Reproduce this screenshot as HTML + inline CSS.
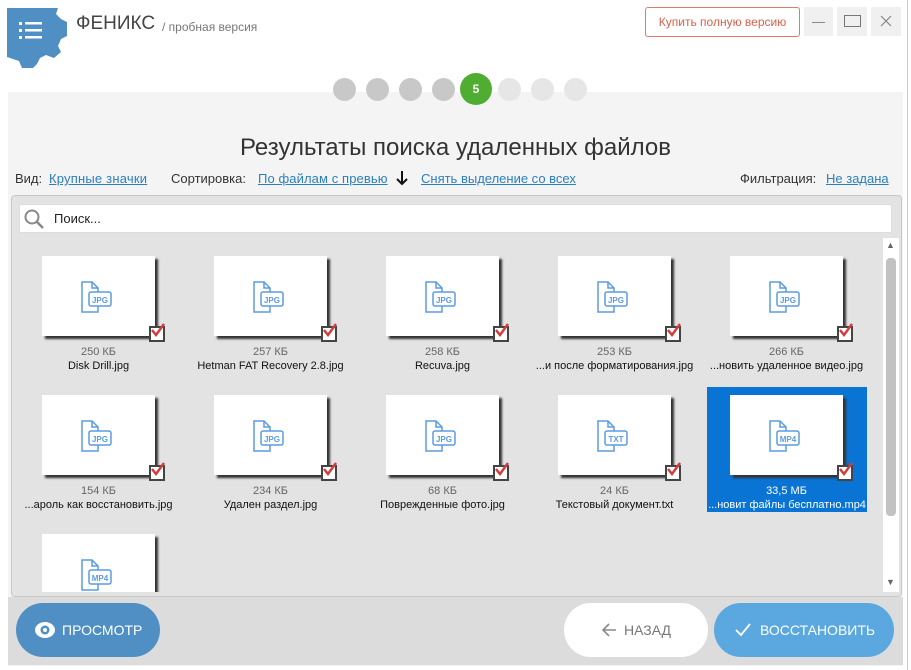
<!DOCTYPE html>
<html><head><meta charset="utf-8"><style>
*{margin:0;padding:0;box-sizing:border-box}
body{width:911px;height:670px;background:#fff;position:relative;overflow:hidden;font-family:"Liberation Sans","DejaVu Sans",sans-serif}
.a{position:absolute}
.dot{position:absolute;width:23px;height:23px;border-radius:50%;top:78px}
.cell{position:absolute;width:113px;height:126px}
.th{position:absolute;left:0;top:0;width:113px;height:80px;background:#fff;box-shadow:3px 3px 2px #333}
.ck{position:absolute;left:107px;top:70px;width:16px;height:16px;border:2px solid #444;background:#fff}
.sz{position:absolute;left:-40px;width:193px;top:90px;text-align:center;font-size:11px;color:#666}
.nm{position:absolute;left:-40px;width:193px;top:104px;text-align:center;font-size:11px;color:#111;white-space:nowrap}
.sel .sz,.sel .nm{color:#fff}
.t{position:absolute;top:171px;font-size:13px;color:#333;white-space:nowrap}
.lnk{color:#2a7fc0;text-decoration:underline}
</style></head><body>
<svg class="a" style="left:0;top:0" width="72" height="72" viewBox="0 0 72 72">
<path d="M7 8 L58 8 L56 14 L61 19 L67 22 L67 36 L61 39 L58 46 L61 52 L54 58 L46 55 L40 58 L37 64 L33 68 L22 68 L19 61 L7 57 Z" fill="#4f8fc4"/>
<g fill="#fff"><rect x="19" y="22" width="3" height="3"/><rect x="25" y="22" width="17" height="2.5"/><rect x="19" y="29" width="3" height="3"/><rect x="25" y="29" width="17" height="2.5"/><rect x="19" y="36" width="3" height="3"/><rect x="25" y="36" width="17" height="2.5"/></g>
</svg>
<div class="a" style="left:76px;top:13px;font-size:19px;color:#444">ФЕНИКС</div>
<div class="a" style="left:162px;top:20px;font-size:12px;color:#777">/ пробная версия</div>
<div class="a" style="left:645px;top:7px;width:155px;height:30px;border:1px solid #e07a6a;border-radius:3px;color:#d9604c;font-size:12px;text-align:center;line-height:28px">Купить полную версию</div>
<div class="a" style="left:804px;top:7px;width:29px;height:29px;background:#f0f0f0"><div class="a" style="left:8px;top:15px;width:13px;height:1px;background:#888"></div></div>
<div class="a" style="left:837px;top:7px;width:30px;height:29px;background:#f0f0f0"><div class="a" style="left:7px;top:8px;width:17px;height:12px;border:1px solid #777"></div></div>
<svg class="a" style="left:871px;top:7px" width="30" height="29"><rect width="30" height="29" fill="#f0f0f0"/><path d="M10 9 L20 19 M20 9 L10 19" stroke="#888" stroke-width="1.2"/></svg>
<div class="a" style="left:907px;top:0;width:1px;height:670px;background:#ccc"></div>
<div class="a" style="left:8px;top:92px;width:895px;height:574px;background:#f4f4f4"></div>
<div class="dot" style="left:333px;background:#c8c8c8"></div>
<div class="dot" style="left:366px;background:#c8c8c8"></div>
<div class="dot" style="left:399px;background:#c8c8c8"></div>
<div class="dot" style="left:432px;background:#c8c8c8"></div>
<div class="a" style="left:460px;top:73px;width:32px;height:32px;border-radius:50%;background:#4fae31;color:#fff;font-weight:bold;font-size:12px;text-align:center;line-height:32px">5</div>
<div class="dot" style="left:498px;background:#e6e6e6"></div>
<div class="dot" style="left:531px;background:#e6e6e6"></div>
<div class="dot" style="left:564px;background:#e6e6e6"></div>
<div class="a" style="left:0;width:911px;top:134px;text-align:center;font-size:24px;color:#333">Результаты поиска удаленных файлов</div>
<div class="t" style="left:15px">Вид:</div>
<div class="t lnk" style="left:49px;letter-spacing:0.2px">Крупные значки</div>
<div class="t" style="left:171px">Сортировка:</div>
<div class="t lnk" style="left:258px;letter-spacing:0.1px">По файлам с превью</div>
<svg class="a" style="left:396px;top:170px" width="12" height="16"><path d="M6 1 V14 M1 9 L6 14 L11 9" fill="none" stroke="#111" stroke-width="2"/></svg>
<div class="t lnk" style="left:421px">Снять выделение со всех</div>
<div class="t" style="left:740px">Фильтрация:</div>
<div class="t lnk" style="left:826px">Не задана</div>
<div class="a" style="left:11px;top:195px;width:891px;height:402px;background:#e3e3e3;border:1px solid #c8c8c8;border-radius:4px"></div>
<div class="a" style="left:19px;top:204px;width:873px;height:29px;background:#fff;border:1px solid #ddd"></div>
<svg class="a" style="left:23px;top:208px" width="22" height="22" viewBox="0 0 22 22"><circle cx="9" cy="9" r="6.5" fill="none" stroke="#888" stroke-width="2"/><path d="M14 14 L20 20" stroke="#888" stroke-width="2.5"/></svg>
<div class="a" style="left:54px;top:211px;font-size:13px;color:#222">Поиск...</div>
<div class="a" style="left:883px;top:238px;width:16px;height:354px;background:#fff"></div>
<div class="a" style="left:886px;top:258px;width:10px;height:258px;background:#c2c2c2;border-radius:4px"></div>
<div class="a" style="left:886px;top:240px;font-size:9px;color:#666">▲</div>
<div class="a" style="left:886px;top:577px;font-size:9px;color:#666">▼</div>
<svg width="0" height="0" style="position:absolute"><defs>
<g id="ic"><path d="M40 26 H50 L56 32 V56 H40 Z" fill="none" stroke="#5b9be0" stroke-width="1.5"/><path d="M50 26 V32 H56" fill="none" stroke="#5b9be0" stroke-width="1.5"/><rect x="47" y="36" width="22" height="14" rx="2" fill="#fff" stroke="#5b9be0" stroke-width="1.5"/></g>
<g id="ck"><path d="M4 8 L8 13 L16 2" fill="none" stroke="#d43c3c" stroke-width="2.5"/></g>
</defs></svg>
<div class="cell" style="left:42px;top:256px"><div class="th"><svg width="113" height="80"><use href="#ic"/><text x="58" y="47" font-size="8" font-weight="bold" fill="#5b9be0" text-anchor="middle" font-family="Liberation Sans">JPG</text></svg></div><div class="ck"></div><svg class="a" style="left:106px;top:66px" width="20" height="18"><use href="#ck"/></svg><div class="sz">250 КБ</div><div class="nm">Disk Drill.jpg</div></div>
<div class="cell" style="left:214px;top:256px"><div class="th"><svg width="113" height="80"><use href="#ic"/><text x="58" y="47" font-size="8" font-weight="bold" fill="#5b9be0" text-anchor="middle" font-family="Liberation Sans">JPG</text></svg></div><div class="ck"></div><svg class="a" style="left:106px;top:66px" width="20" height="18"><use href="#ck"/></svg><div class="sz">257 КБ</div><div class="nm">Hetman FAT Recovery 2.8.jpg</div></div>
<div class="cell" style="left:386px;top:256px"><div class="th"><svg width="113" height="80"><use href="#ic"/><text x="58" y="47" font-size="8" font-weight="bold" fill="#5b9be0" text-anchor="middle" font-family="Liberation Sans">JPG</text></svg></div><div class="ck"></div><svg class="a" style="left:106px;top:66px" width="20" height="18"><use href="#ck"/></svg><div class="sz">258 КБ</div><div class="nm">Recuva.jpg</div></div>
<div class="cell" style="left:558px;top:256px"><div class="th"><svg width="113" height="80"><use href="#ic"/><text x="58" y="47" font-size="8" font-weight="bold" fill="#5b9be0" text-anchor="middle" font-family="Liberation Sans">JPG</text></svg></div><div class="ck"></div><svg class="a" style="left:106px;top:66px" width="20" height="18"><use href="#ck"/></svg><div class="sz">253 КБ</div><div class="nm">...и после форматирования.jpg</div></div>
<div class="cell" style="left:730px;top:256px"><div class="th"><svg width="113" height="80"><use href="#ic"/><text x="58" y="47" font-size="8" font-weight="bold" fill="#5b9be0" text-anchor="middle" font-family="Liberation Sans">JPG</text></svg></div><div class="ck"></div><svg class="a" style="left:106px;top:66px" width="20" height="18"><use href="#ck"/></svg><div class="sz">266 КБ</div><div class="nm">...новить удаленное видео.jpg</div></div>
<div class="cell" style="left:42px;top:395px"><div class="th"><svg width="113" height="80"><use href="#ic"/><text x="58" y="47" font-size="8" font-weight="bold" fill="#5b9be0" text-anchor="middle" font-family="Liberation Sans">JPG</text></svg></div><div class="ck"></div><svg class="a" style="left:106px;top:66px" width="20" height="18"><use href="#ck"/></svg><div class="sz">154 КБ</div><div class="nm">...ароль как восстановить.jpg</div></div>
<div class="cell" style="left:214px;top:395px"><div class="th"><svg width="113" height="80"><use href="#ic"/><text x="58" y="47" font-size="8" font-weight="bold" fill="#5b9be0" text-anchor="middle" font-family="Liberation Sans">JPG</text></svg></div><div class="ck"></div><svg class="a" style="left:106px;top:66px" width="20" height="18"><use href="#ck"/></svg><div class="sz">234 КБ</div><div class="nm">Удален раздел.jpg</div></div>
<div class="cell" style="left:386px;top:395px"><div class="th"><svg width="113" height="80"><use href="#ic"/><text x="58" y="47" font-size="8" font-weight="bold" fill="#5b9be0" text-anchor="middle" font-family="Liberation Sans">JPG</text></svg></div><div class="ck"></div><svg class="a" style="left:106px;top:66px" width="20" height="18"><use href="#ck"/></svg><div class="sz">68 КБ</div><div class="nm">Поврежденные фото.jpg</div></div>
<div class="cell" style="left:558px;top:395px"><div class="th"><svg width="113" height="80"><use href="#ic"/><text x="58" y="47" font-size="8" font-weight="bold" fill="#5b9be0" text-anchor="middle" font-family="Liberation Sans">TXT</text></svg></div><div class="ck"></div><svg class="a" style="left:106px;top:66px" width="20" height="18"><use href="#ck"/></svg><div class="sz">24 КБ</div><div class="nm">Текстовый документ.txt</div></div>
<div class="a" style="left:707px;top:387px;width:160px;height:125px;background:#0a74d4"></div>
<div class="cell sel" style="left:730px;top:395px"><div class="th"><svg width="113" height="80"><use href="#ic"/><text x="58" y="47" font-size="8" font-weight="bold" fill="#5b9be0" text-anchor="middle" font-family="Liberation Sans">MP4</text></svg></div><div class="ck"></div><svg class="a" style="left:106px;top:66px" width="20" height="18"><use href="#ck"/></svg><div class="sz">33,5 МБ</div><div class="nm" style="left:-23px;width:160px;overflow:hidden">...новит файлы бесплатно.mp4</div></div>
<div class="cell" style="left:42px;top:534px;height:58px;overflow:hidden;width:120px"><div class="th"><svg width="113" height="80"><use href="#ic"/><text x="58" y="47" font-size="8" font-weight="bold" fill="#5b9be0" text-anchor="middle" font-family="Liberation Sans">MP4</text></svg></div></div>
<div class="a" style="left:8px;top:597px;width:895px;height:68px;background:#dcdcdc"></div>
<div class="a" style="left:16px;top:603px;width:144px;height:54px;border-radius:27px;background:#4f8fc4;color:#fff;font-size:14px;line-height:54px;padding-left:46px">ПРОСМОТР</div>
<svg class="a" style="left:34px;top:620px" width="22" height="20"><ellipse cx="11" cy="10" rx="10" ry="8" fill="#fff"/><circle cx="11" cy="10" r="4.5" fill="#4f8fc4"/><circle cx="11" cy="10" r="2" fill="#fff"/></svg>
<div class="a" style="left:564px;top:603px;width:144px;height:54px;border-radius:27px;background:#fff;color:#777;font-size:14px;line-height:54px;padding-left:60px">НАЗАД</div>
<svg class="a" style="left:600px;top:621px" width="18" height="18"><path d="M16 9 H3 M9 3 L3 9 L9 15" fill="none" stroke="#888" stroke-width="1.6"/></svg>
<div class="a" style="left:714px;top:603px;width:180px;height:54px;border-radius:27px;background:#5aa8df;color:#fff;font-size:14px;line-height:54px;padding-left:46px">ВОССТАНОВИТЬ</div>
<svg class="a" style="left:734px;top:622px" width="18" height="16"><path d="M2 8 L7 13 L16 2" fill="none" stroke="#fff" stroke-width="1.8"/></svg>
</body></html>
